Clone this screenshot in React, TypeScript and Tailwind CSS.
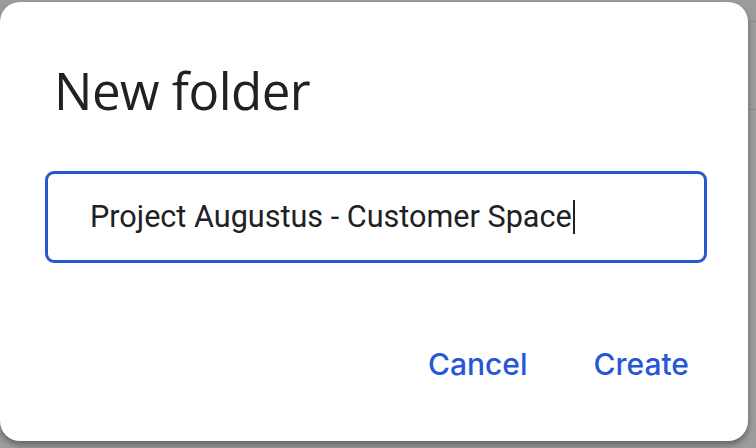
import React from 'react';

const App: React.FC = () => {
  return (
    <div className="relative w-[756px] h-[448px] overflow-hidden bg-[#9c9c9c]">
      {/* page behind the dialog */}
      <div className="flex flex-col">
        <div className="h-[22px] border-b border-[#8a8a8a]"></div>
        <div className="h-[88px] border-b border-[#8a8a8a]"></div>
      </div>

      {/* dialog */}
      <div className="absolute left-0 top-[2px] w-[748px] h-[439px] bg-white rounded-[20px] shadow-[0_4px_6px_rgba(0,0,0,0.35)] flex flex-col">
        <h1 className="mt-[56px] ml-[54px] text-[51px] leading-[64px] text-[#202124] font-['Open_Sans',sans-serif] tracking-[-0.5px]">
          New folder
        </h1>

        <div className="mt-[49px] ml-[45px] w-[662px] h-[92px] border-[3px] border-[#2a56cf] rounded-[9px] flex items-center pl-[42px]">
          <span className="text-[30.6px] text-[#202124] font-['Roboto',sans-serif] leading-none">
            Project Augustus - Customer Space
          </span>
          <span className="ml-[1px] w-[2px] h-[34px] bg-[#202124]"></span>
        </div>

        <div className="mt-[86px] mr-[59px] flex justify-end gap-[66px] text-[30px] leading-none font-medium text-[#2557d6] font-['Inter',sans-serif]">
          <span>Cancel</span>
          <span>Create</span>
        </div>
      </div>
    </div>
  );
};

export default App;
